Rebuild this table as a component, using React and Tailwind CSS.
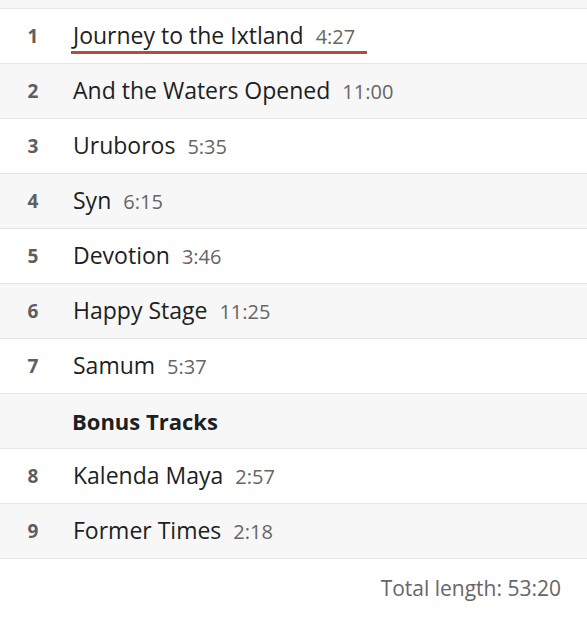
const tracks = [
  { n: 1, title: 'Journey to the Ixtland', len: '4:27', current: true },
  { n: 2, title: 'And the Waters Opened', len: '11:00' },
  { n: 3, title: 'Uruboros', len: '5:35' },
  { n: 4, title: 'Syn', len: '6:15' },
  { n: 5, title: 'Devotion', len: '3:46' },
  { n: 6, title: 'Happy Stage', len: '11:25' },
  { n: 7, title: 'Samum', len: '5:37' },
  { heading: 'Bonus Tracks' },
  { n: 8, title: 'Kalenda Maya', len: '2:57' },
  { n: 9, title: 'Former Times', len: '2:18' },
]

function Row({ t, shade }) {
  const bg = shade ? 'bg-[#f7f7f7]' : 'bg-white'
  if (t.heading) {
    return (
      <li className={`flex h-[55px] items-center border-b border-[#e4e4e4] pl-[72px] ${bg}`}>
        <span className="text-[22px] font-bold text-[#1d1f22]">{t.heading}</span>
      </li>
    )
  }
  return (
    <li className={`flex h-[55px] items-center border-b border-[#e4e4e4] ${bg}`}>
      <span className="w-[66px] text-center text-[19px] font-bold text-[#5e5e5e]">{t.n}</span>
      <span
        className={`ml-[5px] flex items-baseline gap-[12px] pl-[2px] leading-[28px] ${
          t.current ? 'border-b-[3px] border-[#b0503a] pt-[3px] pr-[12px]' : ''
        }`}
      >
        <span className="text-[23px] text-[#1d1f22]">{t.title}</span>
        <span className="text-[20px] text-[#666]">{t.len}</span>
      </span>
    </li>
  )
}

export default function App() {
  return (
    <div className="min-h-[617px] w-[587px] bg-white font-['Open_Sans',sans-serif]">
      <div className="h-[9px] border-b border-[#e4e4e4] bg-[#f7f7f7]" />
      <ul>
        {tracks.map((t, i) => (
          <Row key={i} t={t} shade={i % 2 === 1} />
        ))}
      </ul>
      <div className="flex justify-end pr-[26px] pt-[14px] text-[21px] text-[#666]">Total length: 53:20</div>
    </div>
  )
}
